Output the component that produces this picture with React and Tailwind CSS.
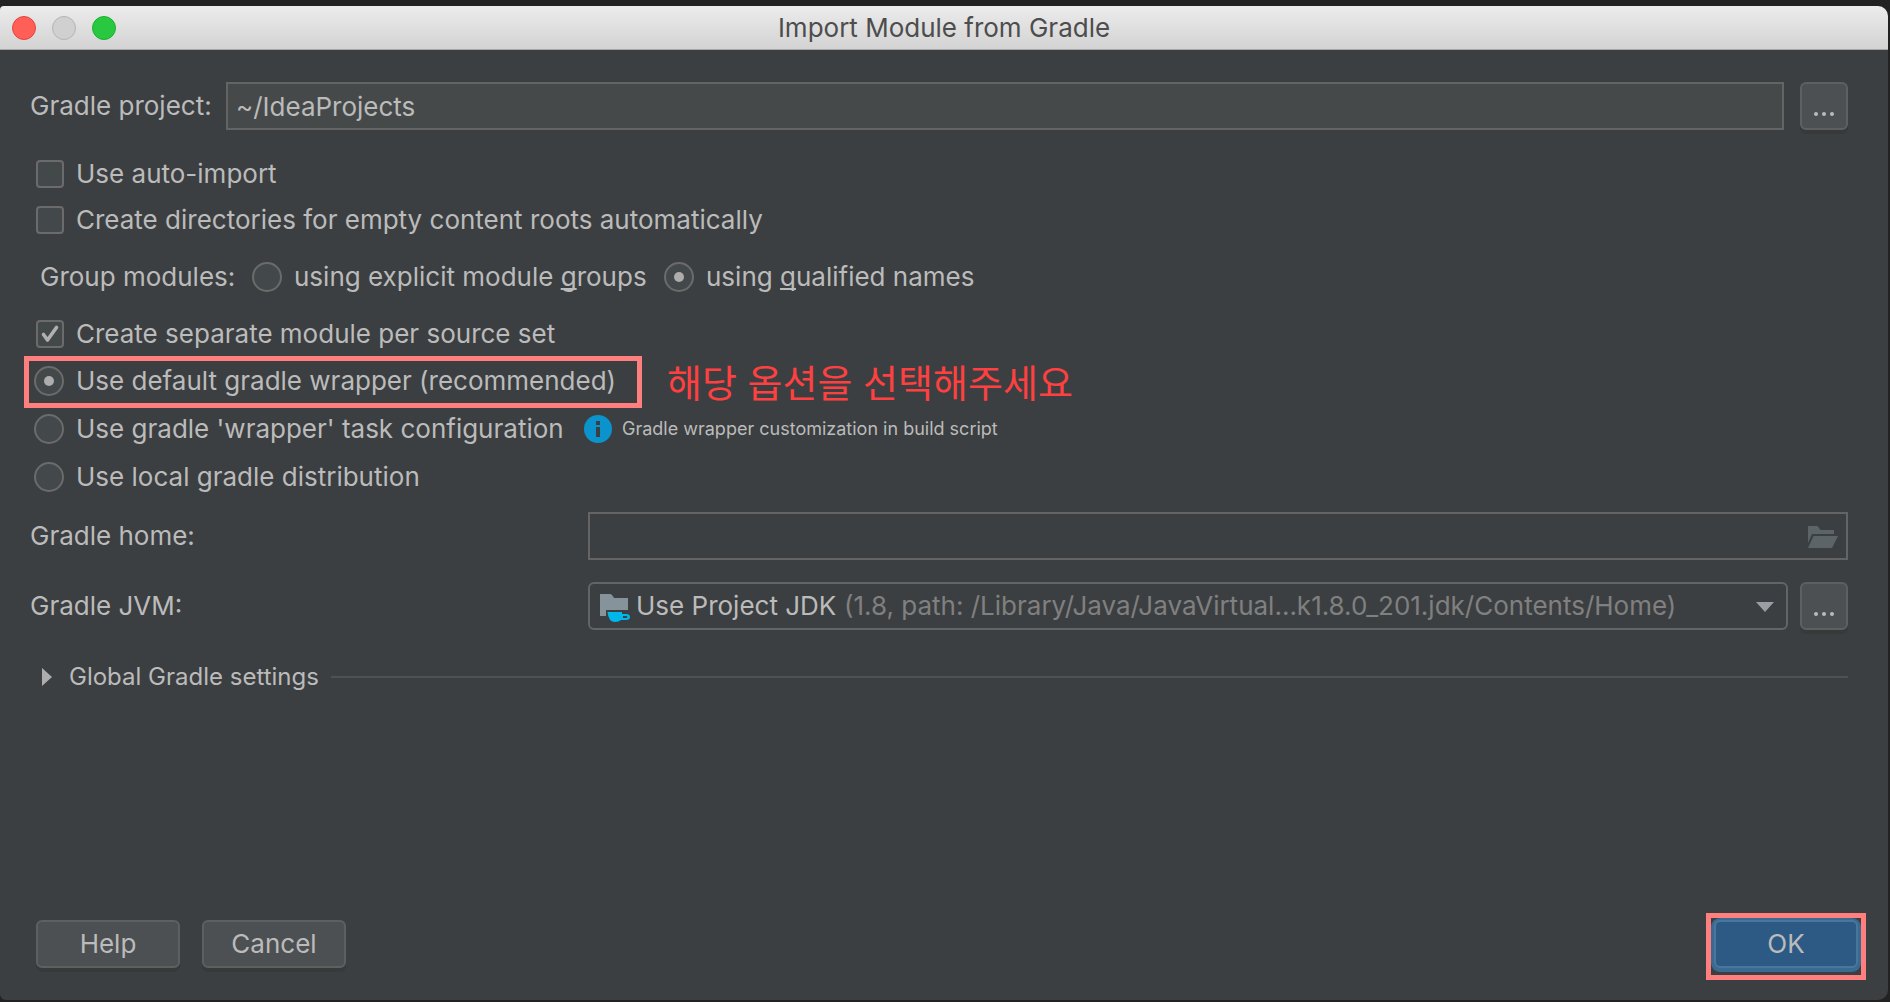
import React from "react";

const fieldBox = "h-12 border-2 border-[#646464] outline-none";
const smallButton =
  "flex h-12 w-12 shrink-0 items-center justify-center rounded-[6px] border-2 border-[#5e6060] bg-[#4c5052] shadow-[0_4px_0_#37393b]";
const footerButton =
  "h-12 w-36 rounded-[6px] border-2 border-[#5e6060] bg-[#4c5052] text-center shadow-[0_4px_0_#37393b]";
const mnemonic = "decoration-2 underline-offset-2 [text-decoration-skip-ink:none]";

function Check({ label, defaultChecked }) {
  return (
    <label className="flex h-[46px] items-center gap-3 pl-3">
      <span className="grid h-7 w-7 place-items-center">
        <input
          type="checkbox"
          defaultChecked={defaultChecked}
          className="peer col-start-1 row-start-1 h-7 w-7 appearance-none rounded-[4px] border-2 border-[#6b6b6b] bg-[#43494a]"
        />
        <svg
          viewBox="0 0 28 28"
          className="pointer-events-none col-start-1 row-start-1 hidden h-7 w-7 peer-checked:block"
          fill="none"
          stroke="#b0b0b0"
          strokeWidth="3.6"
          strokeLinecap="round"
          strokeLinejoin="round"
        >
          <path d="M7.5 14.5 L11.5 20 L20.5 7.5" />
        </svg>
      </span>
      {label}
    </label>
  );
}

function Radio({ name, defaultChecked }) {
  return (
    <input
      type="radio"
      name={name}
      defaultChecked={defaultChecked}
      className="grid h-[30px] w-[30px] shrink-0 appearance-none place-items-center rounded-full border-2 border-[#6b6b6b] bg-[#43494a] checked:before:h-[10px] checked:before:w-[10px] checked:before:rounded-full checked:before:bg-[#adadad] checked:before:content-['']"
    />
  );
}

function Dots() {
  return (
    <svg viewBox="0 0 20 4" className="mt-4 h-1 w-5" fill="#bbbbbb">
      <circle cx="2" cy="2" r="2" />
      <circle cx="10" cy="2" r="2" />
      <circle cx="18" cy="2" r="2" />
    </svg>
  );
}

export default function App() {
  return (
    <div className="flex min-h-screen flex-col bg-[#222222] pt-[6px] pr-[2px] pb-[2px] font-['Inter',sans-serif] text-[26px] leading-8 text-[#bbbbbb]">
      <div className="flex flex-1 flex-col overflow-hidden rounded-tl-[4px] rounded-tr-[10px] rounded-br-[10px] rounded-bl-[6px] bg-[#3c3f41]">
        <header className="grid h-11 grid-cols-[1fr_auto_1fr] items-center border-b border-[#a9a9a9] bg-linear-to-b from-[#ececec] to-[#d3d3d3] px-3">
          <div className="flex gap-4">
            <button aria-label="Close" className="h-6 w-6 rounded-full border border-[#e2463f] bg-[#ff5f57]" />
            <button aria-label="Minimize" className="h-6 w-6 rounded-full border border-[#b4b4b4] bg-[#d0d0d0]" />
            <button aria-label="Zoom" className="h-6 w-6 rounded-full border border-[#1fae2f] bg-[#28c940]" />
          </div>
          <h1 className="text-[#4d4d4d]">Import Module from Gradle</h1>
        </header>

        <main className="flex flex-1 flex-col pt-8 pr-10 pb-8 pl-6">
          <div className="flex items-center">
            <label htmlFor="project" className="w-[202px] pl-[6px] whitespace-nowrap">
              Gradle project:
            </label>
            <input
              id="project"
              defaultValue="~/IdeaProjects"
              className={`${fieldBox} min-w-0 flex-1 bg-[#45494a] px-2`}
            />
            <button aria-label="Browse project" className={`${smallButton} ml-4`}>
              <Dots />
            </button>
          </div>

          <div className="mt-[21px]">
            <Check label="Use auto-import" />
            <Check label="Create directories for empty content roots automatically" />
          </div>

          <div className="flex h-[68px] items-center pl-4" role="radiogroup" aria-labelledby="group">
            <span id="group" className="w-[212px]">
              Group modules:
            </span>
            <label className="flex w-[412px] items-center gap-3">
              <Radio name="modules" />
              <span>
                using explicit module <u className={mnemonic}>g</u>roups
              </span>
            </label>
            <label className="flex items-center gap-3">
              <Radio name="modules" defaultChecked />
              <span>
                using <u className={mnemonic}>q</u>ualified names
              </span>
            </label>
          </div>

          <Check label="Create separate module per source set" defaultChecked />
          <div className="flex h-12 items-center">
            <label className="relative flex h-12 w-[618px] items-center gap-3 pl-[10px]">
              <Radio name="wrapper" defaultChecked />
              Use default gradle wrapper (recommended)
              <span className="pointer-events-none absolute inset-x-0 -top-px -bottom-[3px] border-[5px] border-[#ff7f7f]" />
            </label>
            <p className="ml-[25px] font-['Noto_Sans_CJK_KR',sans-serif] text-[38px] text-[#ff4040]" lang="ko">
              해당 옵션을 선택해주세요
            </p>
          </div>
          <div className="flex h-12 items-center">
            <label className="flex w-[560px] items-center gap-3 pl-[10px]">
              <Radio name="wrapper" />
              Use gradle 'wrapper' task configuration
            </label>
            <svg viewBox="0 0 28 28" className="h-7 w-7">
              <circle cx="14" cy="14" r="14" fill="#0a93cc" />
              <path d="M12 6h4v4h-4zM12 12h4v10h-4z" fill="#3c3f41" />
            </svg>
            <span className="ml-[10px] text-[18px]">Gradle wrapper customization in build script</span>
          </div>
          <label className="flex h-12 items-center gap-3 pl-[10px]">
            <Radio name="wrapper" />
            Use local gradle distribution
          </label>

          <div className="mt-[11px] grid grid-cols-[564px_1fr] items-center gap-y-[22px]">
            <label htmlFor="home" className="pl-[6px]">
              Gradle home:
            </label>
            <div className="relative flex">
              <input id="home" className={`${fieldBox} min-w-0 flex-1 bg-transparent pr-12 pl-2`} />
              <button aria-label="Choose Gradle home" className="absolute top-[14px] right-[10px]">
                <svg viewBox="0 0 30 22" className="h-[22px] w-[30px]" fill="#5d6468">
                  <path d="M0 0H9.5L12.5 4H26V8H4L0 17Z" />
                  <path d="M5.5 10H30L24 22H0Z" />
                </svg>
              </button>
            </div>
            <label htmlFor="jvm" className="pl-[6px]">
              Gradle JVM:
            </label>
            <div className="flex min-w-0 gap-3">
              <div className="relative flex min-w-0 flex-1">
                <select
                  id="jvm"
                  className={`${fieldBox} w-full appearance-none rounded-[6px] bg-transparent pl-[46px]`}
                >
                  <option>Use Project JDK</option>
                </select>
                <svg viewBox="0 0 30 28" className="pointer-events-none absolute top-3 left-3 h-7 w-[30px]">
                  <path d="M0 0H10Q12 0 14 4H28V16H6V22H0Z" fill="#87939a" />
                  <path
                    fillRule="evenodd"
                    d="M7.5 18H22V20H26Q30 20 30 23T26 26H21Q19 28 15 28Q8.500 28 7.500 18ZM23 22V24H26Q27.500 24 27.500 23T26 22Z"
                    fill="#00b7eb"
                  />
                </svg>
                <span className="pointer-events-none absolute top-2 left-[256px] whitespace-nowrap text-[#808080]">
                  (1.8, path: /Library/Java/JavaVirtual...k1.8.0_201.jdk/Contents/Home)
                </span>
                <svg viewBox="0 0 18 10" className="pointer-events-none absolute top-5 right-[14px] h-[10px] w-[18px]">
                  <path d="M0 0H18L9 10Z" fill="#9b9fa3" />
                </svg>
              </div>
              <button aria-label="Configure JVM" className={smallButton}>
                <Dots />
              </button>
            </div>
          </div>

          <button className="mt-[31px] flex items-center text-left text-[24px]" aria-expanded="false">
            <svg viewBox="0 0 10 18" className="ml-[18px] h-[18px] w-[10px]">
              <path d="M0 0L10 9L0 18Z" fill="#adadad" />
            </svg>
            <span className="ml-[17px]">Global Gradle settings</span>
            <span className="ml-3 h-[2px] flex-1 bg-[#515151]" />
          </button>

          <footer className="mt-auto -mr-[10px] flex gap-[22px] pl-3">
            <button className={footerButton}>Help</button>
            <button className={footerButton}>Cancel</button>
            <div className="relative ml-auto">
              <button className="h-12 w-36 rounded-[6px] border-2 border-[#4b769c] bg-[#2d5a85] text-center shadow-[0_1px_0_3px_#396a92]">
                OK
              </button>
              <span className="pointer-events-none absolute -top-[7px] -right-2 -bottom-3 -left-2 border-[5px] border-[#ff7f7f]" />
            </div>
          </footer>
        </main>
      </div>
    </div>
  );
}
